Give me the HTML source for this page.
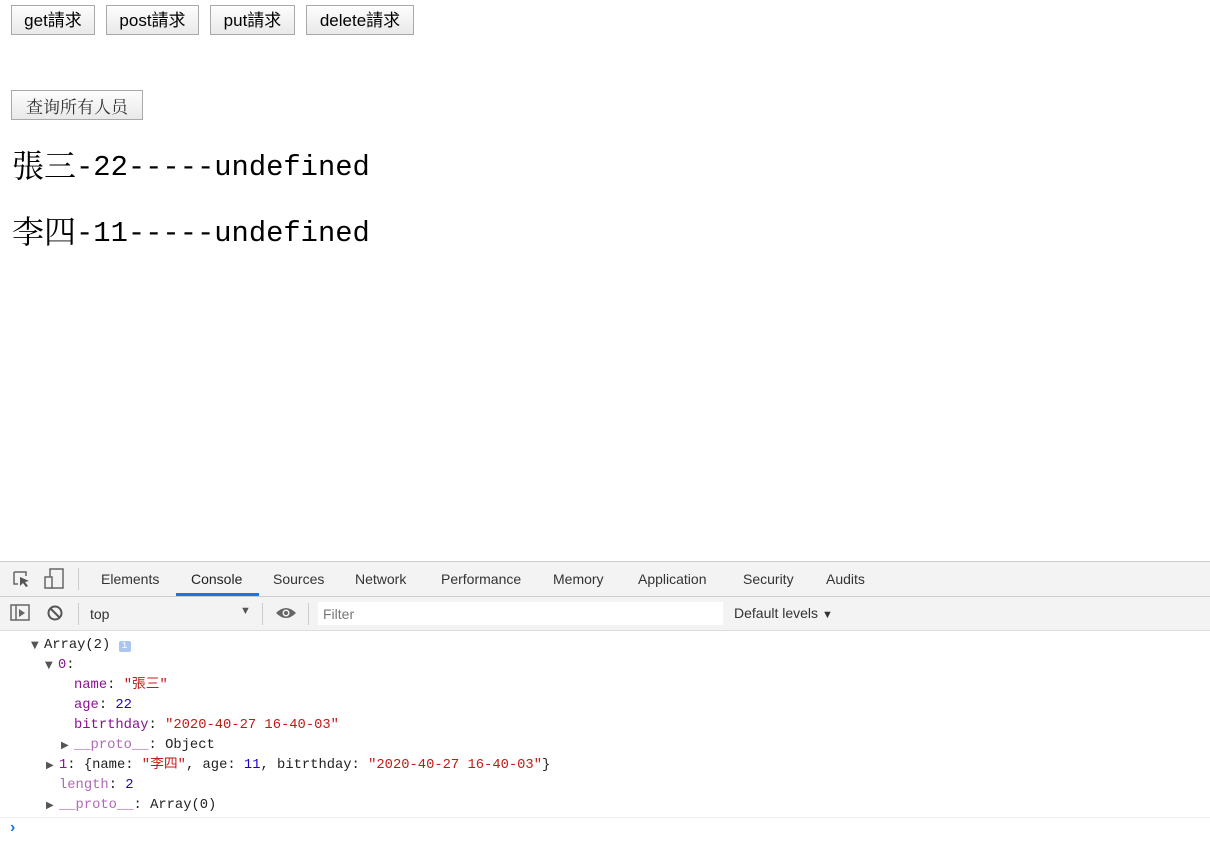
<!DOCTYPE html>
<html><head><meta charset="utf-8"><style>
body{margin:0;width:1210px;height:853px;position:relative;overflow:hidden;background:#fff;font-family:"Liberation Sans","Noto Sans CJK SC",sans-serif}
.b{position:absolute;height:30px;box-sizing:border-box;border:1px solid #a9a9a9;background:linear-gradient(#fdfdfd,#e9e9e9);font-size:17px;line-height:29px;text-align:center;color:#000;font-family:"Liberation Sans","Noto Sans CJK SC",sans-serif}
.h{position:absolute;left:12px;font-family:"Liberation Mono","Noto Serif CJK SC",monospace;font-size:28.8px;line-height:36px;white-space:pre}
.h i{font-style:normal;font-family:"Noto Serif CJK SC",serif;font-size:32px;position:relative;top:2px}
.dt{position:absolute;left:0;top:561px;width:1210px;height:292px;background:#fff;border-top:1px solid #ccc}
.tb{position:absolute;left:0;top:0;width:1210px;height:34px;background:#f3f3f3;border-bottom:1px solid #ccc;font-size:14px;color:#333}
.tab{position:absolute;top:9px}
.tb2{position:absolute;left:0;top:35px;width:1210px;height:33px;background:#f3f3f3;border-bottom:1px solid #ddd;font-size:14px;color:#333}
.c{position:absolute;font-family:"Liberation Mono","Noto Sans CJK SC",monospace;font-size:13.8px;line-height:20px;white-space:pre;color:#222}
.p{color:#881391}.s{color:#c41a16}.n{color:#1c00cf}.l{color:#b06ab8}
.tri{display:inline-block;width:13px;font-size:10px;color:#555;font-family:"DejaVu Sans",sans-serif}
</style></head><body>
<div class="b" style="left:11px;top:5px;width:84px">get請求</div>
<div class="b" style="left:106px;top:5px;width:93px">post請求</div>
<div class="b" style="left:210px;top:5px;width:85px">put請求</div>
<div class="b" style="left:306px;top:5px;width:108px">delete請求</div>
<div class="b" style="left:11px;top:90px;width:132px;font-family:'Noto Serif CJK SC',serif;color:#333">查询所有人员</div>
<div class="h" style="top:144px"><i>張三</i>-22-----undefined</div>
<div class="h" style="top:210px"><i>李四</i>-11-----undefined</div>
<div class="dt">
<div class="tb">
<svg style="position:absolute;left:12px;top:8px" width="20" height="18"><path d="M2 2h12v4M2 2v12h4" stroke="#666" fill="none" stroke-width="1.5"/><path d="M8 7l9 4-4 1 3 4-2 1-3-4-3 3z" fill="#555"/></svg>
<svg style="position:absolute;left:44px;top:6px" width="22" height="22"><rect x="6" y="1" width="13" height="19" stroke="#666" fill="none" stroke-width="1.5"/><rect x="1" y="9" width="7" height="11" stroke="#666" fill="#f3f3f3" stroke-width="1.5"/></svg>
<div style="position:absolute;left:78px;top:6px;width:1px;height:22px;background:#ccc"></div>
<span class="tab" style="left:101px">Elements</span>
<span class="tab" style="left:191px;color:#222">Console</span>
<div style="position:absolute;left:176px;top:31px;width:83px;height:3px;background:#1a73e8"></div>
<span class="tab" style="left:273px">Sources</span>
<span class="tab" style="left:355px">Network</span>
<span class="tab" style="left:441px">Performance</span>
<span class="tab" style="left:553px">Memory</span>
<span class="tab" style="left:638px">Application</span>
<span class="tab" style="left:743px">Security</span>
<span class="tab" style="left:826px">Audits</span>
</div>
<div class="tb2">
<svg style="position:absolute;left:10px;top:7px" width="20" height="18"><rect x="1" y="1" width="18" height="15" stroke="#666" fill="none" stroke-width="1.5"/><path d="M6 1v15" stroke="#666" stroke-width="1.5"/><path d="M9 5l6 4-6 4z" fill="#666"/></svg>
<svg style="position:absolute;left:47px;top:8px" width="18" height="18"><circle cx="8" cy="8" r="6.5" stroke="#555" fill="none" stroke-width="2"/><path d="M3.5 3.5l9 9" stroke="#555" stroke-width="2"/></svg>
<div style="position:absolute;left:78px;top:6px;width:1px;height:22px;background:#ccc"></div>
<span style="position:absolute;left:90px;top:9px">top</span>
<span style="position:absolute;left:240px;top:8px;font-size:11px;color:#555">▼</span>
<div style="position:absolute;left:262px;top:6px;width:1px;height:22px;background:#ccc"></div>
<svg style="position:absolute;left:275px;top:9px" width="22" height="14"><path d="M1 7Q11-3 21 7Q11 17 1 7z" fill="#666"/><circle cx="11" cy="7" r="3.5" fill="#f3f3f3"/><circle cx="11" cy="7" r="2" fill="#666"/></svg>
<div style="position:absolute;left:308px;top:6px;width:1px;height:22px;background:#ccc"></div>
<div style="position:absolute;left:318px;top:5px;width:405px;height:23px;background:#fff"></div>
<span style="position:absolute;left:323px;top:9px;color:#777">Filter</span>
<span style="position:absolute;left:734px;top:8px">Default levels <span style="font-size:11px">▼</span></span>
</div>
<div class="c" style="left:31px;top:74px"><span class="tri">▼</span>Array(2) <span style="background:#aac6f0;color:#fff;font-size:10px;border-radius:2px;padding:0 3px">i</span></div>
<div class="c" style="left:45px;top:94px"><span class="tri">▼</span><span class="p">0</span>:</div>
<div class="c" style="left:74px;top:114px"><span class="p">name</span>: <span class="s">"張三"</span></div>
<div class="c" style="left:74px;top:134px"><span class="p">age</span>: <span class="n">22</span></div>
<div class="c" style="left:74px;top:154px"><span class="p">bitrthday</span>: <span class="s">"2020-40-27 16-40-03"</span></div>
<div class="c" style="left:61px;top:174px"><span class="tri">▶</span><span class="l">__proto__</span>: Object</div>
<div class="c" style="left:46px;top:194px"><span class="tri">▶</span><span class="p">1</span>: {name: <span class="s">"李四"</span>, age: <span class="n">11</span>, bitrthday: <span class="s">"2020-40-27 16-40-03"</span>}</div>
<div class="c" style="left:59px;top:214px"><span class="l">length</span>: <span class="n">2</span></div>
<div class="c" style="left:46px;top:234px"><span class="tri">▶</span><span class="l">__proto__</span>: Array(0)</div>
<div style="position:absolute;left:0;top:255px;width:1210px;height:1px;background:#eee"></div>
<div style="position:absolute;left:10px;top:257px;color:#1a73e8;font-size:16px;font-weight:bold">›</div>
</div>
</body></html>
